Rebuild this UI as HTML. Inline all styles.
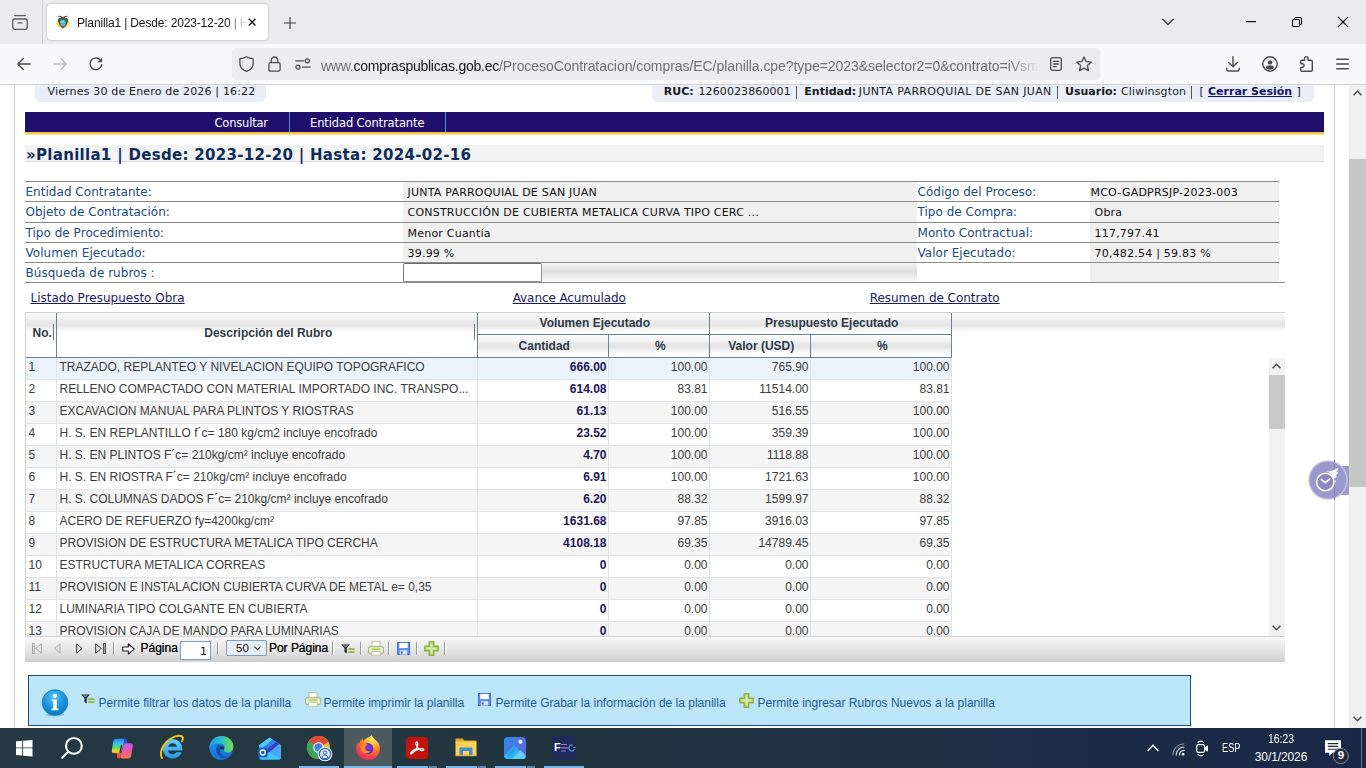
<!DOCTYPE html><html lang="es"><head><meta charset="utf-8"><title>Planilla1 | Desde: 2023-12-20 | Hasta: 2024-02-16</title><style>
*{box-sizing:border-box;margin:0;padding:0}
html,body{width:1366px;height:768px;overflow:hidden;background:#fff}
body{font-family:"Liberation Sans",sans-serif;position:relative}
.a{position:absolute;white-space:pre}
.v{font-family:"DejaVu Sans","Liberation Sans",sans-serif}
svg{position:absolute;overflow:visible}
#tabbar{left:0;top:0;width:1366px;height:44px;background:#ebebee}
#toolbar{left:0;top:44px;width:1366px;height:41px;background:#f9f9fb;border-bottom:1px solid #d2d2d6}
#tab{left:47px;top:4px;width:221px;height:36px;background:#fff;border-radius:4px;box-shadow:0 0 2px rgba(0,0,0,.35)}
#urlbar{left:232px;top:48px;width:868px;height:32px;background:#ececef;border-radius:4px}
#page{left:0;top:85px;width:1349px;height:643px;background:#fff;overflow:hidden}
#vscroll{left:1349px;top:85px;width:17px;height:643px;background:#f0f0f0}
#taskbar{left:0;top:728px;width:1366px;height:40px;background:linear-gradient(90deg,#243943 0%,#22363f 42%,#1c2c45 76%,#1a2846 100%)}
.lbl{color:#1b4b87;font-size:12px;letter-spacing:.03px}
.val{color:#111;font-size:11px;letter-spacing:.22px}
.hl{height:1px;background:#8a8a8a}
.lnk{color:#1a1a6c;font-size:12px;text-decoration:underline}
.gh{font:bold 12px "Liberation Sans",sans-serif;color:#2e3b47;text-align:center}
.row{left:26px;width:925px;height:22px;font-size:12px;color:#3c3c3c;line-height:19px;border-bottom:1px solid #dfe3e8}
.row span{position:absolute;top:0px;white-space:pre}
.row .n{left:2.5px}
.row .d{left:33.5px}
.row .q{right:344.5px;font-weight:bold;color:#1c1560}
.row .p1{right:243.5px}
.row .v1{right:142.5px}
.row .p2{right:1.5px}
.cb{width:1px;background:#dfe3e8}
.sep{width:1px;background:#999;box-shadow:1px 0 0 #fff}
</style></head><body><div id="tabbar" class="a"></div><div class="a" style="left:42px;top:0;width:1px;height:44px;background:#cfcfd4"></div><svg style="left:12px;top:14px" width="16" height="16" viewBox="0 0 16 16" fill="none" stroke="#5b5b66" stroke-width="1.3" stroke-linecap="round"><path d="M2.600 1.600h10.800"/><rect x="0.700" y="5" width="14.600" height="10.300" rx="2.200"/><path d="M6 8.800h4"/></svg><div id="tab" class="a"></div><svg style="left:56px;top:14.700px" width="14" height="14" viewBox="0 0 14 14"><ellipse cx="7" cy="8.300" rx="6.800" ry="4.800" fill="#f6e96e"/><path d="M2.400 3.800C4 3.200 10 3.200 11.600 3.800c.6 3.600-.6 7.600-4.600 9.300C3 11.400 1.800 7.400 2.400 3.800z" fill="#5b4630"/><path d="M2.400 3.800C4 3.200 10 3.200 11.600 3.800c.2 1.300.2 2.600-.1 3.800H2.500c-.3-1.200-.3-2.500-.1-3.800z" fill="#3f5a3c"/><ellipse cx="7" cy="7.600" rx="2.900" ry="3" fill="#49b4c4"/><ellipse cx="6.200" cy="6.700" rx="1.800" ry="1.300" fill="#8fe0d8" opacity=".8"/><path d="M4.300 9.600h5.400l-.8 1.500H5.100z" fill="#6fb8d8"/><path d="M1.500 1.300C3.500 0 5.500 1 7 2.500 8.500 1 10.500 0 12.500 1.300 10.500 1.300 9 2.100 7.700 4H6.300C5 2.100 3.500 1.300 1.500 1.300z" fill="#4a4038"/><path d="M5.900 12.300h2.200L7 14z" fill="#c2473a"/></svg><div class="a" style="left:77px;top:15px;width:170px;height:16px;overflow:hidden;font-size:12px;line-height:16px;color:#15141a;letter-spacing:-0.15px;-webkit-mask-image:linear-gradient(90deg,#000 88%,transparent 100%);mask-image:linear-gradient(90deg,#000 88%,transparent 100%)">Planilla1 | Desde: 2023-12-20 | Hasta: 2024-02-16</div><svg style="left:247.800px;top:17.900px" width="8.300" height="8.300" viewBox="0 0 10 10" stroke="#15141a" stroke-width="1.600" fill="none"><path d="M1 1l8 8M9 1l-8 8"/></svg><svg style="left:283.700px;top:16.700px" width="12" height="12" viewBox="0 0 12 12" stroke="#3c3c44" stroke-width="1.150" fill="none"><path d="M6 0v12M0 6h12"/></svg><svg style="left:1162px;top:18px" width="12" height="8" viewBox="0 0 12 8" stroke="#3c3c44" stroke-width="1.3" fill="none"><path d="M0.5 1l5.5 5.5L11.5 1"/></svg><svg style="left:1246px;top:21px" width="10" height="2" viewBox="0 0 10 2"><rect width="10" height="1.2" fill="#111"/></svg><svg style="left:1292px;top:17px" width="10" height="10" viewBox="0 0 10 10" fill="none" stroke="#111" stroke-width="1.1"><rect x="0.5" y="2.5" width="7" height="7" rx="1"/><path d="M2.5 2.3V1.5a1 1 0 0 1 1-1H8.5a1 1 0 0 1 1 1V6.5a1 1 0 0 1-1 1H7.8"/></svg><svg style="left:1338px;top:17px" width="10" height="10" viewBox="0 0 10 10" stroke="#111" stroke-width="1.1" fill="none"><path d="M0 0l10 10M10 0L0 10"/></svg><div id="toolbar" class="a"></div><svg style="left:17px;top:57px" width="14" height="14" viewBox="0 0 14 14" fill="none" stroke="#4a4a52" stroke-width="1.4" stroke-linecap="round" stroke-linejoin="round"><path d="M13.3 7H1M6.3 1.5L0.8 7l5.5 5.5"/></svg><svg style="left:53px;top:57px" width="14" height="14" viewBox="0 0 14 14" fill="none" stroke="#b9b9c0" stroke-width="1.4" stroke-linecap="round" stroke-linejoin="round"><path d="M0.7 7H13M7.7 1.5L13.2 7l-5.5 5.5"/></svg><svg style="left:89px;top:57px" width="14" height="14" viewBox="0 0 14 14" fill="none" stroke="#4a4a52" stroke-width="1.4" stroke-linecap="round"><path d="M12.6 7.6A5.8 5.8 0 1 1 10.6 2.4"/><path d="M13.2 0.6v4.6H8.6z" fill="#4a4a52" stroke="none"/></svg><div id="urlbar" class="a"></div><svg style="left:239px;top:56px" width="15" height="16" viewBox="0 0 15 16" fill="none" stroke="#4a4a52" stroke-width="1.3" stroke-linejoin="round"><path d="M7.5 0.8C5.6 2 3.4 2.6 0.9 2.7v5c0 3.6 2.6 6.300 6.600 7.600 4-1.300 6.600-4 6.600-7.600v-5C11.600 2.600 9.400 2 7.500 0.800z"/></svg><svg style="left:268px;top:56px" width="13" height="16" viewBox="0 0 13 16" fill="none" stroke="#4a4a52" stroke-width="1.3"><rect x="0.9" y="6.6" width="11.2" height="8.6" rx="1.8"/><path d="M3.3 6.500V4.200a3.200 3.200 0 0 1 6.400 0V6.500"/></svg><svg style="left:295px;top:58px" width="16" height="12" viewBox="0 0 16 12" fill="none" stroke="#4a4a52" stroke-width="1.3" stroke-linecap="round"><path d="M0.8 2.800H8.500"/><circle cx="12.3" cy="2.800" r="2"/><path d="M7.500 9.200H15.200"/><circle cx="3" cy="9.200" r="2"/></svg><div class="a" style="left:321px;top:55.500px;width:720px;height:20px;overflow:hidden;font-size:14px;line-height:20px;color:#6f6f78;letter-spacing:-0.06px;-webkit-mask-image:linear-gradient(90deg,#000 95.500%,transparent 99.800%);mask-image:linear-gradient(90deg,#000 95.500%,transparent 99.800%)"><span style="letter-spacing:-0.25px">www.<span style="color:#15141a">compraspublicas.gob.ec</span></span>/ProcesoContratacion/compras/EC/planilla.cpe?type=2023&amp;selector2=0&amp;contrato=iVsmkq</div><svg style="left:1050px;top:57px" width="12" height="14" viewBox="0 0 12 14" fill="none" stroke="#4a4a52" stroke-width="1.3" stroke-linecap="round"><rect x="0.7" y="0.7" width="10.6" height="12.6" rx="2"/><path d="M3.300 4.300h5.400M3.300 7h5.400M3.300 9.700h3"/></svg><svg style="left:1076px;top:56px" width="16" height="16" viewBox="0 0 16 16" fill="none" stroke="#4a4a52" stroke-width="1.3" stroke-linejoin="round"><path d="M8 1l2.100 4.600 5 .6-3.700 3.400 1 5L8 12.100 3.600 14.600l1-5L0.900 6.200l5-.6z"/></svg><svg style="left:1226px;top:56px" width="14" height="16" viewBox="0 0 14 16" fill="none" stroke="#4a4a52" stroke-width="1.4" stroke-linecap="round" stroke-linejoin="round"><path d="M7 0.800V10.500M2.600 6.400L7 10.800l4.400-4.400M0.800 12.200v1.300a1.500 1.500 0 0 0 1.500 1.500h9.400a1.500 1.500 0 0 0 1.500-1.500v-1.300"/></svg><svg style="left:1262px;top:56px" width="16" height="16" viewBox="0 0 16 16" fill="none" stroke="#4a4a52" stroke-width="1.4"><circle cx="8" cy="8" r="7.200"/><circle cx="8" cy="6.400" r="2.200" fill="#4a4a52" stroke="none"/><path d="M3.600 11.600c1-1.600 2.500-2.300 4.400-2.300s3.400.7 4.400 2.300c-1 1.400-2.500 2.200-4.400 2.200s-3.400-.8-4.400-2.200z" fill="#4a4a52" stroke="none"/></svg><svg style="left:1299px;top:56px" width="16" height="16" viewBox="0 0 16 16" fill="none" stroke="#4a4a52" stroke-width="1.4" stroke-linejoin="round"><path d="M5.500 4.200V2.600a1.800 1.800 0 0 1 3.600 0v1.600h3.200a1 1 0 0 1 1 1v9a1 1 0 0 1-1 1H2.800a1 1 0 0 1-1-1v-2.800h1.400a1.800 1.800 0 0 0 0-3.600H1.800V5.200a1 1 0 0 1 1-1z"/></svg><svg style="left:1335.600px;top:58px" width="13" height="12" viewBox="0 0 13 12" stroke="#4a4a52" stroke-width="1.4" stroke-linecap="round"><path d="M0.700 1.200h11.600M0.700 6h11.600M0.700 10.800h11.600"/></svg><div id="page" class="a"><div class="a" style="left:14px;top:0;width:1px;height:643px;background:#cfcfcf"></div><div class="a" style="left:1334px;top:0;width:1px;height:643px;background:#cfcfcf"></div><div class="a" style="left:35px;top:0;width:230.600px;height:16.600px;background:#e9eef8;border-radius:0 0 6px 6px"></div><div class="a v" style="left:47.5px;top:0px;font-size:11px;line-height:14px;color:#1a1a1a;letter-spacing:.17px">Viernes 30 de Enero de 2026 | 16:22</div><div class="a" style="left:652px;top:0;width:662px;height:17px;background:#e9eef8;border-radius:0 0 6px 6px"></div><div class="a v" style="left:663.8px;top:0px;font-size:11px;line-height:14px;color:#1a1a1a;font-weight:bold;">RUC:</div><div class="a v" style="left:698.5px;top:0px;font-size:11px;line-height:14px;color:#1a1a1a;letter-spacing:.1px">1260023860001</div><div class="a v" style="left:804.3px;top:0px;font-size:11px;line-height:14px;color:#1a1a1a;font-weight:bold;">Entidad:</div><div class="a v" style="left:858.8px;top:0px;font-size:11px;line-height:14px;color:#1a1a1a;letter-spacing:.34px">JUNTA PARROQUIAL DE SAN JUAN</div><div class="a v" style="left:1065px;top:0px;font-size:11px;line-height:14px;color:#1a1a1a;font-weight:bold;">Usuario:</div><div class="a v" style="left:1121px;top:0px;font-size:11px;line-height:14px;color:#1a1a1a;letter-spacing:.15px">Cliwinsgton</div><div class="a v" style="left:1199.5px;top:0px;font-size:11px;line-height:14px;color:#1a1a1a;">[</div><div class="a v" style="left:1208px;top:0px;font-size:11px;line-height:14px;color:#1a1a1a;font-weight:bold;color:#13136b;text-decoration:underline">Cerrar Sesión</div><div class="a v" style="left:1296.5px;top:0px;font-size:11px;line-height:14px;color:#1a1a1a;">]</div><div class="a" style="left:796px;top:0.5px;width:1px;height:13px;background:#555"></div><div class="a" style="left:1057px;top:0.5px;width:1px;height:13px;background:#555"></div><div class="a" style="left:1191px;top:0.5px;width:1px;height:13px;background:#555"></div><div class="a" style="left:25px;top:27px;width:1299px;height:20px;background:#21106b"></div><div class="a" style="left:25px;top:47px;width:1299px;height:3px;background:linear-gradient(#f2b632,#f8d05a 60%,#fdeeb5)"></div><div class="a v" style="left:214.5px;top:31px;font-size:11.5px;line-height:15px;color:#fff;letter-spacing:-.2px">Consultar</div><div class="a v" style="left:310px;top:31px;font-size:11.5px;line-height:15px;color:#fff;letter-spacing:-.12px">Entidad Contratante</div><div class="a" style="left:289px;top:27px;width:1px;height:20px;background:#4f8fd6"></div><div class="a" style="left:445px;top:27px;width:1px;height:20px;background:#4f8fd6"></div><div class="a" style="left:25px;top:60px;width:1299px;height:17px;background:#f3f3f3;border-bottom:1px solid #dcdcdc"></div><div class="a v" style="left:26px;top:61px;font-size:15px;font-weight:bold;line-height:19px;color:#0d2c5c;letter-spacing:.3px">»Planilla1 | Desde: 2023-12-20 | Hasta: 2024-02-16</div><div class="a" style="left:403px;top:97px;width:514px;height:81px;background:#f0f0f0"></div><div class="a" style="left:1090px;top:97px;width:189px;height:100px;background:#f0f0f0"></div><div class="a" style="left:541px;top:178px;width:376px;height:19px;background:linear-gradient(#f4f4f4,#dedede 45%,#f6f6f6 90%,#fff)"></div><div class="a hl" style="left:25px;top:96px;width:1254px"></div><div class="a v lbl" style="left:25.5px;top:100px;line-height:15px">Entidad Contratante:</div><div class="a v val" style="left:407.5px;top:101px;line-height:14px">JUNTA PARROQUIAL DE SAN JUAN</div><div class="a v lbl" style="left:917.5px;top:100px;line-height:15px">Código del Proceso:</div><div class="a v val" style="left:1090.5px;top:101px;line-height:14px">MCO-GADPRSJP-2023-003</div><div class="a hl" style="left:25px;top:116px;width:1254px"></div><div class="a v lbl" style="left:25.5px;top:120px;line-height:15px">Objeto de Contratación:</div><div class="a v val" style="left:407.5px;top:121px;line-height:14px">CONSTRUCCIÓN DE CUBIERTA METALICA CURVA TIPO CERC ...</div><div class="a v lbl" style="left:917.5px;top:120px;line-height:15px">Tipo de Compra:</div><div class="a v val" style="left:1094.5px;top:121px;line-height:14px">Obra</div><div class="a hl" style="left:25px;top:137px;width:1254px"></div><div class="a v lbl" style="left:25.5px;top:141px;line-height:15px">Tipo de Procedimiento:</div><div class="a v val" style="left:407.5px;top:142px;line-height:14px">Menor Cuantía</div><div class="a v lbl" style="left:917.5px;top:141px;line-height:15px">Monto Contractual:</div><div class="a v val" style="left:1094.5px;top:142px;line-height:14px">117,797.41</div><div class="a hl" style="left:25px;top:157px;width:1254px"></div><div class="a v lbl" style="left:25.5px;top:161px;line-height:15px">Volumen Ejecutado:</div><div class="a v val" style="left:407.5px;top:162px;line-height:14px">39.99 %</div><div class="a v lbl" style="left:917.5px;top:161px;line-height:15px">Valor Ejecutado:</div><div class="a v val" style="left:1094.5px;top:162px;line-height:14px">70,482.54 | 59.83 %</div><div class="a hl" style="left:25px;top:177px;width:1254px"></div><div class="a v lbl" style="left:25.5px;top:181px;line-height:15px">Búsqueda de rubros :</div><div class="a hl" style="left:25px;top:197px;width:1260px"></div><div class="a" style="left:403px;top:178px;width:139px;height:19px;background:#fff;border:1px solid #8f8f8f;border-top-color:#6b6b6b;border-left-color:#7b7b7b;border-radius:2px"></div><div class="a v lnk" style="left:30.5px;top:206px;line-height:15px">Listado Presupuesto Obra</div><div class="a v lnk" style="left:512.7px;top:206px;line-height:15px;letter-spacing:-.09px">Avance Acumulado</div><div class="a v lnk" style="left:869.7px;top:206px;line-height:15px;letter-spacing:-.04px">Resumen de Contrato</div><div class="a" style="left:25px;top:227px;width:1260px;height:1px;background:#cfcfcf"></div><div class="a" style="left:25px;top:228px;width:1px;height:324px;background:#cfcfcf"></div><div class="a" style="left:26px;top:228px;width:1259px;height:22px;background:linear-gradient(#fbfbfb 0px,#f5f5f5 5px,#e9e9e9 9px,#e4e4e4 12px,#f0f0f0 15px,#fbfbfb 18px,#fff 20px)"></div><div class="a" style="left:478px;top:250px;width:473px;height:22px;background:linear-gradient(#fbfbfb 0px,#f5f5f5 5px,#e9e9e9 9px,#e4e4e4 12px,#f0f0f0 15px,#fbfbfb 18px,#fff 20px)"></div><div class="a" style="left:56px;top:228px;width:1px;height:45px;background:#67838f"></div><div class="a" style="left:477px;top:228px;width:1px;height:45px;background:#67838f"></div><div class="a" style="left:709px;top:228px;width:1px;height:45px;background:#67838f"></div><div class="a" style="left:951px;top:228px;width:1px;height:45px;background:#67838f"></div><div class="a" style="left:608px;top:250px;width:1px;height:23px;background:#67838f"></div><div class="a" style="left:810px;top:250px;width:1px;height:23px;background:#67838f"></div><div class="a" style="left:478px;top:249px;width:473px;height:1px;background:#67838f"></div><div class="a" style="left:26px;top:272px;width:926px;height:1px;background:#67838f"></div><div class="a" style="left:53px;top:239px;width:1px;height:16px;background:#777"></div><div class="a" style="left:474px;top:239px;width:1px;height:16px;background:#777"></div><div class="a gh" style="left:27.25px;top:241px;width:30px;line-height:14px">No.</div><div class="a gh" style="left:58.25px;top:241px;width:420px;line-height:14px">Descripción del Rubro</div><div class="a gh" style="left:479.25px;top:231px;width:231px;line-height:14px">Volumen Ejecutado</div><div class="a gh" style="left:711.25px;top:231px;width:241px;line-height:14px">Presupuesto Ejecutado</div><div class="a gh" style="left:479.25px;top:254px;width:130px;line-height:14px">Cantidad</div><div class="a gh" style="left:610.25px;top:254px;width:100px;line-height:14px">%</div><div class="a gh" style="left:711.25px;top:254px;width:100px;line-height:14px">Valor (USD)</div><div class="a gh" style="left:812.25px;top:254px;width:140px;line-height:14px">%</div><div class="a" style="left:0;top:273px;width:1285px;height:278px;overflow:hidden"><div class="a row" style="top:0px;background:#eaf3fc"><span class="n">1</span><span class="d">TRAZADO, REPLANTEO Y NIVELACION EQUIPO TOPOGRAFICO</span><span class="q">666.00</span><span class="p1">100.00</span><span class="v1">765.90</span><span class="p2">100.00</span></div><div class="a row" style="top:22px;background:#fff"><span class="n">2</span><span class="d">RELLENO COMPACTADO CON MATERIAL IMPORTADO INC. TRANSPO...</span><span class="q">614.08</span><span class="p1">83.81</span><span class="v1">11514.00</span><span class="p2">83.81</span></div><div class="a row" style="top:44px;background:#f5f5f5"><span class="n">3</span><span class="d">EXCAVACION MANUAL PARA PLINTOS Y RIOSTRAS</span><span class="q">61.13</span><span class="p1">100.00</span><span class="v1">516.55</span><span class="p2">100.00</span></div><div class="a row" style="top:66px;background:#fff"><span class="n">4</span><span class="d">H. S. EN REPLANTILLO f´c= 180 kg/cm2 incluye encofrado</span><span class="q">23.52</span><span class="p1">100.00</span><span class="v1">359.39</span><span class="p2">100.00</span></div><div class="a row" style="top:88px;background:#f5f5f5"><span class="n">5</span><span class="d">H. S. EN PLINTOS F´c= 210kg/cm² incluye encofrado</span><span class="q">4.70</span><span class="p1">100.00</span><span class="v1">1118.88</span><span class="p2">100.00</span></div><div class="a row" style="top:110px;background:#fff"><span class="n">6</span><span class="d">H. S. EN RIOSTRA F´c= 210kg/cm² incluye encofrado</span><span class="q">6.91</span><span class="p1">100.00</span><span class="v1">1721.63</span><span class="p2">100.00</span></div><div class="a row" style="top:132px;background:#f5f5f5"><span class="n">7</span><span class="d">H. S. COLUMNAS DADOS F´c= 210kg/cm² incluye encofrado</span><span class="q">6.20</span><span class="p1">88.32</span><span class="v1">1599.97</span><span class="p2">88.32</span></div><div class="a row" style="top:154px;background:#fff"><span class="n">8</span><span class="d">ACERO DE REFUERZO fy=4200kg/cm²</span><span class="q">1631.68</span><span class="p1">97.85</span><span class="v1">3916.03</span><span class="p2">97.85</span></div><div class="a row" style="top:176px;background:#f5f5f5"><span class="n">9</span><span class="d">PROVISION DE ESTRUCTURA METALICA TIPO CERCHA</span><span class="q">4108.18</span><span class="p1">69.35</span><span class="v1">14789.45</span><span class="p2">69.35</span></div><div class="a row" style="top:198px;background:#fff"><span class="n">10</span><span class="d">ESTRUCTURA METALICA CORREAS</span><span class="q">0</span><span class="p1">0.00</span><span class="v1">0.00</span><span class="p2">0.00</span></div><div class="a row" style="top:220px;background:#f5f5f5"><span class="n">11</span><span class="d">PROVISION E INSTALACION CUBIERTA CURVA DE METAL e= 0,35</span><span class="q">0</span><span class="p1">0.00</span><span class="v1">0.00</span><span class="p2">0.00</span></div><div class="a row" style="top:242px;background:#fff"><span class="n">12</span><span class="d">LUMINARIA TIPO COLGANTE EN CUBIERTA</span><span class="q">0</span><span class="p1">0.00</span><span class="v1">0.00</span><span class="p2">0.00</span></div><div class="a row" style="top:264px;background:#f5f5f5"><span class="n">13</span><span class="d">PROVISION CAJA DE MANDO PARA LUMINARIAS</span><span class="q">0</span><span class="p1">0.00</span><span class="v1">0.00</span><span class="p2">0.00</span></div><div class="a cb" style="left:56px;top:0;height:278px"></div><div class="a cb" style="left:477px;top:0;height:278px"></div><div class="a cb" style="left:608px;top:0;height:278px"></div><div class="a cb" style="left:709px;top:0;height:278px"></div><div class="a cb" style="left:810px;top:0;height:278px"></div><div class="a cb" style="left:951px;top:0;height:278px"></div></div><div class="a" style="left:1268.500px;top:273px;width:16px;height:278px;background:#f1f1f1"></div><div class="a" style="left:1268.500px;top:290px;width:16px;height:54px;background:#c9c9c9"></div><svg style="left:1272px;top:278px" width="9" height="6" viewBox="0 0 9 6" fill="none" stroke="#4d4d4d" stroke-width="1.6"><path d="M0.600 5.200L4.500 1.300l3.900 3.900"/></svg><svg style="left:1272px;top:540px" width="9" height="6" viewBox="0 0 9 6" fill="none" stroke="#4d4d4d" stroke-width="1.6"><path d="M0.600 0.800L4.500 4.700l3.900-3.900"/></svg><div class="a" style="left:25px;top:551px;width:1260px;height:26px;background:linear-gradient(#fafafa 0px,#f1f1f1 4px,#e4e4e4 14px,#cdcdcd 26px);border-top:1px solid #d0d0d0"></div><div class="a sep" style="left:113px;top:557px;height:13px"></div><div class="a sep" style="left:217px;top:557px;height:13px"></div><div class="a sep" style="left:332px;top:557px;height:13px"></div><div class="a sep" style="left:360px;top:557px;height:13px"></div><div class="a sep" style="left:388px;top:557px;height:13px"></div><div class="a sep" style="left:416px;top:557px;height:13px"></div><div class="a sep" style="left:444px;top:557px;height:13px"></div><svg style="left:32px;top:558px" width="11" height="11" viewBox="0 0 11 11" fill="none" stroke="#a9a9a9" stroke-width="1"><rect x="0.5" y="0.5" width="1.6" height="10"/><path d="M9.500 0.800L3.600 5.500l5.900 4.700z"/></svg><svg style="left:54px;top:558px" width="7" height="11" viewBox="0 0 7 11" fill="none" stroke="#a9a9a9" stroke-width="1"><path d="M6 0.800L0.800 5.500 6 10.200z"/></svg><svg style="left:76px;top:558px" width="7" height="11" viewBox="0 0 7 11" fill="none" stroke="#333" stroke-width="1"><path d="M0.700 0.800L6 5.500 0.700 10.200z"/></svg><svg style="left:95px;top:558px" width="11" height="11" viewBox="0 0 11 11" fill="none" stroke="#333" stroke-width="1"><rect x="8.700" y="0.500" width="1.600" height="10"/><path d="M0.700 0.800L6.400 5.500 0.700 10.200z"/></svg><svg style="left:122px;top:558px" width="13" height="12" viewBox="0 0 13 12" fill="#fafafa" stroke="#222" stroke-width="1.1" stroke-linejoin="round"><path d="M0.700 4h5.600V0.900L12.300 6 6.300 11.100V8H0.700z"/></svg><div class="a" style="left:140.500px;top:556px;font-size:12px;line-height:15px;color:#111;text-shadow:0 0 .4px #111">Página</div><div class="a v" style="left:180px;top:556px;width:31px;height:19px;background:#fff;border:1px solid #7f9db9;font-size:11px;line-height:19px;text-align:right;padding-right:3px;color:#111">1</div><div class="a" style="left:226px;top:555px;width:41px;height:16px;background:#e9eef6;border:1px solid #7f9db9;border-radius:1px"></div><div class="a" style="left:236px;top:556px;font-size:11.5px;line-height:15px;color:#111">50</div><svg style="left:254px;top:561px" width="7" height="5" viewBox="0 0 7 5" fill="none" stroke="#333" stroke-width="1.1"><path d="M0.500 0.700L3.500 3.700 6.500 0.700"/></svg><div class="a" style="left:269px;top:556px;font-size:12px;line-height:15px;color:#111;text-shadow:0 0 .4px #111;letter-spacing:-.03px">Por Página</div><svg style="left:341px;top:559px" width="14" height="10" viewBox="0 0 14 10"><path d="M0.200 0.400h8.800L5.700 4.300V9.400L3.500 8V4.300z" fill="#222"/><path d="M2 1.200h5L5 3.200H4z" fill="#8a8a8a"/><rect x="7.200" y="4.300" width="6.300" height="1.700" fill="#8fb43a"/><rect x="7.200" y="7.300" width="6.300" height="1.700" fill="#8fb43a"/></svg><svg style="left:367.5px;top:556px" width="16" height="15" viewBox="0 0 16 15"><rect x="4" y="0.500" width="8" height="6" fill="#fff" stroke="#b9c29a" stroke-width="1"/><rect x="0.600" y="5.600" width="14.800" height="7" rx="2" fill="#f1f3e4" stroke="#a9b779" stroke-width="1.100"/><rect x="3.400" y="7.200" width="9.200" height="2" fill="#b6d94c"/><rect x="3.600" y="10.600" width="8.800" height="3.600" fill="#fff" stroke="#b9c29a" stroke-width=".9"/></svg><svg style="left:396.5px;top:556.5px" width="13" height="13" viewBox="0 0 14 14"><rect x="0.500" y="0.500" width="13" height="13" fill="#5b8af0" stroke="#3f6ad8" stroke-width="1"/><rect x="2.400" y="1" width="9.200" height="5.600" fill="#fff"/><rect x="3" y="8.800" width="8" height="4.700" fill="#dfe6f7"/><rect x="4" y="10" width="2" height="2.400" fill="#3b5fb0"/></svg><svg style="left:424px;top:556px" width="15" height="15" viewBox="0 0 15 15"><path d="M5.200 0.800h4.600v4.400h4.400v4.600H9.800v4.400H5.200V9.800H0.800V5.200h4.400z" fill="#bcd97a" stroke="#8fb044" stroke-width="1.400" stroke-linejoin="round"/><path d="M6.700 2.700h1.600v4h4v1.600h-4v4H6.700v-4h-4V6.700h4z" fill="#dcecae"/></svg><div class="a" style="left:28px;top:590px;width:1163px;height:51px;background:#bde5f8;border:1px solid #1c4a80"></div><svg style="left:41px;top:604px" width="28" height="28" viewBox="0 0 28 28"><defs><radialGradient id="ig" cx=".45" cy=".3" r=".8"><stop offset="0" stop-color="#59c3f5"/><stop offset=".55" stop-color="#1590dc"/><stop offset="1" stop-color="#0b6fb8"/></radialGradient></defs><ellipse cx="14" cy="25.500" rx="9" ry="1.800" fill="rgba(60,90,120,.35)"/><circle cx="14" cy="13.500" r="12.800" fill="url(#ig)" stroke="#0c78c4" stroke-width=".8"/><circle cx="14" cy="6.800" r="2.100" fill="#fff"/><path d="M10.800 10.400h5v9h1.600v1.800h-6.800v-1.800h1.700v-7.200h-1.500z" fill="#fff"/></svg><svg style="left:80.5px;top:609px" width="14" height="10" viewBox="0 0 14 10"><path d="M0.200 0.400h8.800L5.700 4.300V9.400L3.500 8V4.300z" fill="#222"/><path d="M2 1.200h5L5 3.200H4z" fill="#8a8a8a"/><rect x="7.200" y="4.300" width="6.300" height="1.700" fill="#8fb43a"/><rect x="7.200" y="7.300" width="6.300" height="1.700" fill="#8fb43a"/></svg><div class="a" style="left:98.500px;top:611px;color:#1b5a9b;font-size:12px;line-height:14px">Permite filtrar los datos de la planilla</div><svg style="left:304.5px;top:607px" width="16" height="15" viewBox="0 0 16 15"><rect x="4" y="0.500" width="8" height="6" fill="#fff" stroke="#b9c29a" stroke-width="1"/><rect x="0.600" y="5.600" width="14.800" height="7" rx="2" fill="#f1f3e4" stroke="#a9b779" stroke-width="1.100"/><rect x="3.400" y="7.200" width="9.200" height="2" fill="#b6d94c"/><rect x="3.600" y="10.600" width="8.800" height="3.600" fill="#fff" stroke="#b9c29a" stroke-width=".9"/></svg><div class="a" style="left:323.500px;top:611px;color:#1b5a9b;font-size:12px;line-height:14px">Permite imprimir la planilla</div><svg style="left:477.5px;top:607.5px" width="13" height="13" viewBox="0 0 14 14"><rect x="0.500" y="0.500" width="13" height="13" fill="#5b8af0" stroke="#3f6ad8" stroke-width="1"/><rect x="2.400" y="1" width="9.200" height="5.600" fill="#fff"/><rect x="3" y="8.800" width="8" height="4.700" fill="#dfe6f7"/><rect x="4" y="10" width="2" height="2.400" fill="#3b5fb0"/></svg><div class="a" style="left:495.500px;top:611px;color:#1b5a9b;font-size:12px;line-height:14px">Permite Grabar la información de la planilla</div><svg style="left:738.5px;top:607.5px" width="15" height="15" viewBox="0 0 15 15"><path d="M5.200 0.800h4.600v4.400h4.400v4.600H9.800v4.400H5.200V9.800H0.800V5.200h4.400z" fill="#bcd97a" stroke="#8fb044" stroke-width="1.400" stroke-linejoin="round"/><path d="M6.700 2.700h1.600v4h4v1.600h-4v4H6.700v-4h-4V6.700h4z" fill="#dcecae"/></svg><div class="a" style="left:757.500px;top:611px;color:#1b5a9b;font-size:12px;line-height:14px">Permite ingresar Rubros Nuevos a la planilla</div><div class="a" style="left:1336px;top:380.5px;width:13px;height:29.500px;background:#9c9bd0"></div><svg style="left:1307.500px;top:375px" width="40" height="40" viewBox="0 0 40 40"><circle cx="20" cy="20" r="19.700" fill="#c6c5df"/><circle cx="20" cy="20" r="18.300" fill="#9a99ce"/><path d="M26.500 0v40" stroke="#7d7bb8" stroke-width="1" opacity=".8"/><circle cx="17.300" cy="22" r="8.700" fill="#8c89c0" stroke="#fff" stroke-width="1.500"/><path d="M13.200 19.300l4.100 3.400 4.300-3.600" fill="none" stroke="#fff" stroke-width="1.500" stroke-linecap="round" stroke-linejoin="round"/><path d="M18.500 11.500c3.500-.3 8-1.500 12-3.800-.5 2-1.500 3.500-3 4.800 1-.2 2-.6 2.800-1-.6 2-1.800 3.500-3.400 4.600.7 0 1.400-.2 2-.4-.8 1.500-2 2.600-3.300 3.300-.5-3-3-6.500-7.100-7.500zM27.800 19.800c.5.800.3 2-.5 3.200-.1-1-.2-2 .5-3.200z" fill="#fff"/></svg></div><div id="vscroll" class="a"></div><div class="a" style="left:1349px;top:159px;width:17px;height:328px;background:#c6c6c6"></div><svg style="left:1353px;top:90px" width="9" height="6" viewBox="0 0 9 6" fill="none" stroke="#4d4d4d" stroke-width="1.600"><path d="M0.600 5.200L4.500 1.300l3.900 3.900"/></svg><svg style="left:1353px;top:716px" width="9" height="6" viewBox="0 0 9 6" fill="none" stroke="#4d4d4d" stroke-width="1.600"><path d="M0.600 0.800L4.500 4.700l3.900-3.900"/></svg><div id="taskbar" class="a"><div class="a" style="left:344px;top:0;width:48px;height:40px;background:#4c5a60"></div><div class="a" style="left:299px;top:38px;width:40px;height:2px;background:#7ab8ec"></div><div class="a" style="left:344px;top:38px;width:48px;height:2px;background:#7ab8ec"></div><div class="a" style="left:397px;top:38px;width:31px;height:2px;background:#7ab8ec"></div><div class="a" style="left:429px;top:38px;width:8px;height:2px;background:#5e89ad"></div><div class="a" style="left:446px;top:38px;width:31px;height:2px;background:#7ab8ec"></div><div class="a" style="left:478px;top:38px;width:8px;height:2px;background:#5e89ad"></div><div class="a" style="left:495px;top:38px;width:31px;height:2px;background:#7ab8ec"></div><div class="a" style="left:527px;top:38px;width:8px;height:2px;background:#5e89ad"></div><div class="a" style="left:544px;top:38px;width:40px;height:2px;background:#7ab8ec"></div><svg style="left:15.700px;top:11.700000000000045px" width="17" height="17" viewBox="0 0 17 17" fill="#fff"><path d="M0 1.200L6.200 0.750V7.400H0zM7.100 0.680L16.500 0V7.400H7.100zM0 8.200H6.200V15.560L0 15zM7.100 8.200H16.500V16.500L7.100 15.650z"/></svg><svg style="left:60px;top:8px" width="24" height="24" viewBox="0 0 24 24" fill="none" stroke="#fff" stroke-width="2.100" stroke-linecap="round"><circle cx="13.900" cy="9.900" r="7.900"/><path d="M8.200 15.800L2.200 21.800"/></svg><svg style="left:111px;top:9.5px" width="24" height="22" viewBox="0 0 24 22"><defs><linearGradient id="cp1" x1="0" y1="0" x2="0" y2="1"><stop offset="0" stop-color="#2a86f0"/><stop offset=".35" stop-color="#38c4e8"/><stop offset=".6" stop-color="#5fd86a"/><stop offset=".85" stop-color="#f0d838"/><stop offset="1" stop-color="#f0a030"/></linearGradient><linearGradient id="cp2" x1="0" y1="0" x2="0" y2="1"><stop offset="0" stop-color="#b460f0"/><stop offset=".5" stop-color="#e858a8"/><stop offset="1" stop-color="#ff7a40"/></linearGradient></defs><path d="M9.500 0.600h3.600c1.600 0 2.600.8 3 2.200l.8 2.700h-4.500z" fill="#1d55d0"/><path d="M5.800 15h4.500l-1 4c-.3 1-.8 1.600-1.800 1.600-1.200 0-1.700-.8-1.500-2z" fill="#f0502a"/><path d="M4.500 0.800h6.500c1.800 0 2.400 1.200 2 2.600L10.500 12.500c-.5 1.800-1.600 2.800-3.400 2.800H3c-2 0-2.600-1.400-2.100-3.200L2.200 3.600C2.600 1.800 3.200 0.800 4.500 0.800z" fill="url(#cp1)"/><path d="M13.800 5.200h5.700c2 0 2.700 1.400 2.200 3.200l-1.400 9.200c-.5 1.800-1.500 3-3.300 3h-5.500c-1.500 0-2.300-1-1.900-2.400L12 8c.4-1.800.8-2.800 1.800-2.800z" fill="url(#cp2)"/><path d="M10.600 7.300L9 14" stroke="#15252d" stroke-width="1.300" stroke-linecap="round"/></svg><svg style="left:160px;top:7px" width="24" height="24" viewBox="0 0 24 24"><defs><linearGradient id="ie1" x1="0" y1="0" x2="0" y2="1"><stop offset="0" stop-color="#62d2fa"/><stop offset="1" stop-color="#2a98e0"/></linearGradient></defs><path d="M12.600 4a9.700 9.700 0 0 1 9.700 9.700c0 .7 0 1.200-.1 1.700H8c.3 2.300 2.100 3.800 4.600 3.800 1.700 0 3.100-.7 3.900-2h5.100c-1.400 3.900-4.800 6.200-9 6.200-5.600 0-9.700-4.100-9.700-9.700S7 4 12.600 4zm0 4.200c-2.300 0-3.900 1.400-4.400 3.500h8.700c-.4-2.100-2-3.500-4.300-3.500z" fill="url(#ie1)"/><path d="M2 23C-1.500 17 4 7.500 11 3.500 16 .5 21.500-.5 22.800 2.500c.4 1.300 0 2.500-.8 3.700" fill="none" stroke="#f2c41c" stroke-width="1.900" stroke-linecap="round"/></svg><svg style="left:209px;top:8px" width="25" height="24" viewBox="0 0 25 24"><defs><linearGradient id="ed1" x1="0" y1="0" x2="1" y2="0"><stop offset="0" stop-color="#2596e8"/><stop offset=".5" stop-color="#2fc0cc"/><stop offset="1" stop-color="#76dc44"/></linearGradient><linearGradient id="ed2" x1="0" y1="0" x2="1" y2="1"><stop offset="0" stop-color="#2191e6"/><stop offset="1" stop-color="#1668cc"/></linearGradient></defs><circle cx="12.300" cy="12.100" r="11.900" fill="url(#ed2)"/><path d="M9 8.500C6.500 11 6.500 16 9.500 19.500c2.500 3 7.500 3.500 11 1-3.500 1-7.500-.5-9-3.500-1.200-2.500-.7-5 1-6.500-1-1-2.500-1.700-3.500-2z" fill="#1253b4"/><path d="M0.400 12.500C0.400 5 5.500 0 12.500 0c7 0 11.900 4.800 11.900 10.500 0 4-2.900 6-5.900 6-2.500 0-3.700-1-3.700-2.200 0-1 1-1.500 1-3.100 0-2.200-2.300-4-5.300-4C5.500 7.200 1.500 10 .4 12.500z" fill="url(#ed1)"/><ellipse cx="13" cy="12" rx="2.100" ry="1.700" fill="#1b3546"/></svg><svg style="left:258px;top:8.799999999999955px" width="24" height="23" viewBox="0 0 24 23"><defs><clipPath id="olc"><path d="M1.200 8L11.500 0.400 23 8v12.600c0 1-.8 1.800-1.800 1.800H3c-1 0-1.800-.8-1.800-1.800z"/></clipPath></defs><g clip-path="url(#olc)"><rect width="24" height="23" fill="#35b8f6"/><path d="M0 9L11.500 0 15 2.500 2 13z" fill="#58c4ff"/><path d="M2 13L15 2.500l3 2.200L5 15.500z" fill="#2f86ea"/><path d="M5 15.500L18 4.700l3.300 2.300L9 17.500z" fill="#3b3fc6"/><path d="M9 17.500L21.300 7 24 8.800V23z" fill="#4aa8f4"/><path d="M0 23l11-8 13 8z" fill="#3fc6fa"/></g><rect x="0" y="10.800" width="9.600" height="9.400" rx="1.700" fill="#1259c6"/><circle cx="4.800" cy="15.500" r="2.500" fill="none" stroke="#fff" stroke-width="1.400"/></svg><svg style="left:307px;top:8px" width="25" height="25" viewBox="0 0 25 25"><circle cx="11.500" cy="11.500" r="11.500" fill="#e8c02a"/><path d="M11.500 11.500L1.540 5.750A11.500 11.500 0 0 1 21.460 5.750z" fill="#de4a3a"/><path d="M11.500 11.500L21.460 5.750H11.500z" fill="#de4a3a"/><path d="M1.540 5.750A11.500 11.500 0 0 0 11.500 23L11.500 11.500z" fill="#3aa457"/><path d="M11.500 11.500L5.750 21.460 1.540 5.750z" fill="#3aa457"/><circle cx="11.500" cy="11.500" r="5.300" fill="#fff"/><circle cx="11.500" cy="11.500" r="4.200" fill="#3f7fe8"/><circle cx="18" cy="18" r="7.300" fill="#fff"/><circle cx="18" cy="18" r="5.700" fill="#dce8fb" stroke="#2a62c8" stroke-width="1.200"/><circle cx="18" cy="16.600" r="1.700" fill="#eef4ff" stroke="#2a62c8" stroke-width="1"/><path d="M14.800 21.200c.6-1.500 1.800-2.200 3.200-2.200s2.600.7 3.200 2.200c-.9.900-2 1.300-3.200 1.300s-2.300-.4-3.200-1.300z" fill="#eef4ff" stroke="#2a62c8" stroke-width="1"/></svg><svg style="left:356px;top:7px" width="24" height="25" viewBox="0 0 24 25"><defs><radialGradient id="ff1" cx=".7" cy=".15" r="1"><stop offset="0" stop-color="#fff36a"/><stop offset=".3" stop-color="#ffb02a"/><stop offset=".6" stop-color="#ff5a2a"/><stop offset="1" stop-color="#e31587"/></radialGradient><radialGradient id="ff2" cx=".5" cy=".4" r=".6"><stop offset="0" stop-color="#7b3fe0"/><stop offset="1" stop-color="#5a2ab0"/></radialGradient></defs><path d="M12 2.500C13.500 1.800 15 .8 15.800 0c.4 2 2 3 3.700 5 2.300 1.500 4.500 4.500 4.500 8.500C24 20 18.800 25 12 25S0 20 0 13.500c0-2.700.9-5 2.200-6.800 0 1 .3 1.800.8 2.400C3.500 6.500 5 4.500 7 3.500c-.3 1 0 2 .5 2.500C8.500 4.500 10 3 12 2.500z" fill="url(#ff1)"/><circle cx="11.800" cy="13.500" r="5.600" fill="url(#ff2)"/><path d="M6 10c2-1.800 4.500-1.500 6 0-2 .2-3 1.300-3 2.800 0 2.500 2.500 4 5.500 3.200-1.500 2.500-5 3-7.500 1.500S4 12.500 6 10z" fill="#ff8a2a"/></svg><svg style="left:406px;top:9px" width="22" height="22" viewBox="0 0 22 22"><rect width="22" height="22" rx="4" fill="#c3130b"/><path d="M4.500 16.500c1.500-3 4-4 6-4.600 1-2.500 1.600-5 1-6.400-.5-1-1.800-.6-1.600 1 .3 2.500 2.500 5.800 5 6.800 1.500.5 3 .2 2.800-.8-.2-1-2.300-1-4.200-.6-2.500.5-5.500 2-7 4-.8 1.200-2.200 1.200-2 .6z" fill="none" stroke="#fff" stroke-width="1.300" stroke-linejoin="round"/></svg><svg style="left:455px;top:10px" width="22" height="19" viewBox="0 0 22 19"><path d="M0.500 1.500c0-.6.400-1 1-1h6l2 2h11c.6 0 1 .4 1 1V5H0.500z" fill="#e8a820"/><rect x="0.500" y="3.500" width="21" height="14.500" rx="1" fill="#fbd35a"/><path d="M4.500 18V10.500c0-.6.400-1 1-1h11c.6 0 1 .4 1 1V18h-3.500v-5h-6v5z" fill="#3f8fd8"/><rect x="0.500" y="16.800" width="21" height="1.400" fill="#e0b040"/></svg><svg style="left:504px;top:9px" width="22" height="22" viewBox="0 0 22 22"><defs><linearGradient id="ph1" x1="0" y1="0" x2="1" y2="1"><stop offset="0" stop-color="#2f8fe8"/><stop offset="1" stop-color="#6a5ad8"/></linearGradient><clipPath id="phc"><rect width="22" height="22" rx="4"/></clipPath></defs><rect width="22" height="22" rx="4" fill="url(#ph1)"/><g clip-path="url(#phc)"><path d="M-1 20L10.500 8.500 22 20v3H-1z" fill="#2fb6f0"/><path d="M8 22l8.500-9 6.500 7v3z" fill="#5fd0f8"/><path d="M3 17l7.500-7.500 2.500 2.500-8 8z" fill="#1f9ae8" opacity=".7"/></g><circle cx="16.500" cy="4.800" r="2" fill="#fff"/></svg><div class="a" style="left:552px;top:8px;width:24px;height:24px;background:#1c2b5a"></div><div class="a" style="left:554px;top:13px;font-size:11px;font-weight:bold;line-height:13px;color:#fff;letter-spacing:-.5px">F</div><svg style="left:561px;top:15px" width="15" height="10" viewBox="0 0 15 10" fill="none" stroke-linecap="round"><path d="M0.500 1.500h5M0.500 4.800h6M0.500 8h4" stroke="#8f7ad8" stroke-width="1.200"/><path d="M11.500 2a3 3 0 1 0 1.800 4.600" stroke="#4f8fe8" stroke-width="1.200"/><path d="M12.500 4.500l1.800 0" stroke="#e86a5a" stroke-width="1.200"/></svg><svg style="left:1147px;top:15.700000000000045px" width="12" height="8" viewBox="0 0 12 8" fill="none" stroke="#fff" stroke-width="1.300"><path d="M0.600 7L6 1.300 11.400 7"/></svg><svg style="left:1172px;top:14.5px" width="13" height="13" viewBox="0 0 14 14" fill="none" stroke-linecap="round"><path d="M1 13A12 12 0 0 1 13 1" stroke="#8a94a8" stroke-width="1.100"/><path d="M4.500 13A8.500 8.500 0 0 1 13 4.500" stroke="#c8ceda" stroke-width="1.200"/><path d="M8 13A5 5 0 0 1 13 8" stroke="#fff" stroke-width="1.300"/><circle cx="12" cy="12" r="1.400" fill="#fff"/></svg><svg style="left:1196px;top:11.5px" width="12" height="17" viewBox="0 0 12 17" fill="none" stroke="#fff" stroke-width="1.150" stroke-linecap="round"><path d="M2 2.400Q4.800 0 7.600 2.400M2 14.600Q4.800 17 7.600 14.600"/><rect x="0.700" y="4.600" width="8" height="7.800" rx="1.800"/><path d="M8.900 7.900l2.400-1.500v4.200l-2.400-1.500" fill="#fff"/></svg><div class="a" style="left:1221.500px;top:13px;font-size:12px;line-height:15px;color:#fff;transform:scaleX(.77);transform-origin:0 0">ESP</div><div class="a" style="left:1251px;top:4px;width:60px;text-align:center;font-size:12px;line-height:15px;color:#fff;transform:scaleX(.87)">16:23</div><div class="a" style="left:1246px;top:22px;width:70px;text-align:center;font-size:12px;line-height:15px;color:#fff;letter-spacing:-.1px">30/1/2026</div><svg style="left:1325px;top:11.5px" width="26" height="26" viewBox="0 0 26 26"><path d="M0 0.300h16v12.500H7.500l-3.300 3.300v-3.300H0z" fill="#fff"/><path d="M2.800 3.600h10.400M2.800 6.400h10.400M2.800 9.200h10.400" stroke="#1a2640" stroke-width="1.100"/><circle cx="15.800" cy="16" r="7.600" fill="#232a3c" stroke="#7d8496" stroke-width="1"/></svg><div class="a" style="left:1336px;top:21px;width:10px;text-align:center;font-size:11.500px;font-weight:bold;line-height:13px;color:#fff">9</div><div class="a" style="left:1361px;top:0;width:1px;height:40px;background:#6a7688"></div></div></body></html>
